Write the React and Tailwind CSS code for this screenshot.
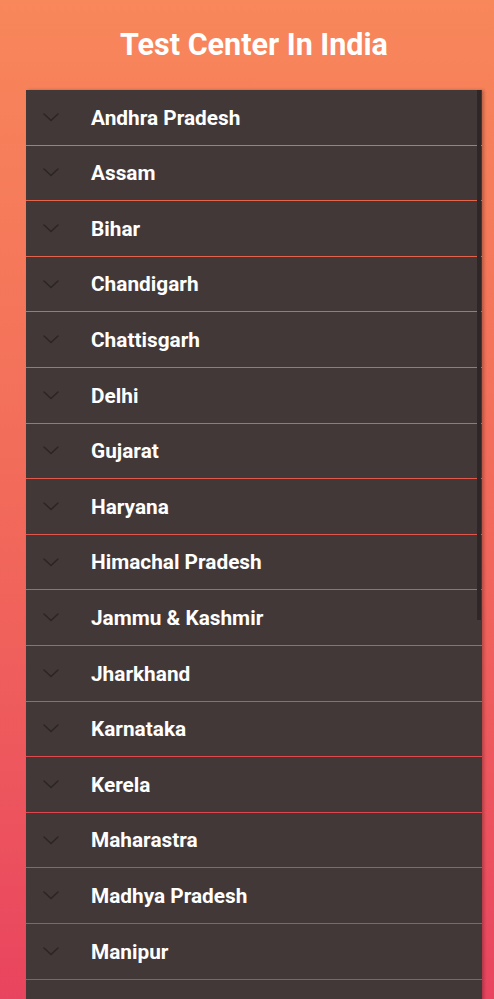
import React from "react";

const states = [
  "Andhra Pradesh",
  "Assam",
  "Bihar",
  "Chandigarh",
  "Chattisgarh",
  "Delhi",
  "Gujarat",
  "Haryana",
  "Himachal Pradesh",
  "Jammu & Kashmir",
  "Jharkhand",
  "Karnataka",
  "Kerela",
  "Maharastra",
  "Madhya Pradesh",
  "Manipur",
  "Meghalaya",
  "Mizoram",
];

const Chevron = () => (
  <svg width="16" height="9" viewBox="0 0 16 9" fill="none">
    <path
      d="M1 1l7 6.5L15 1"
      stroke="#2c2525"
      strokeWidth="1.6"
      strokeLinecap="round"
      strokeLinejoin="round"
    />
  </svg>
);

const App = () => {
  return (
    <div
      className="h-[999px] w-full overflow-hidden bg-gradient-to-b from-[#f8875a] via-[#f26a5a] to-[#e9445f]"
      style={{ fontFamily: "Roboto, 'Liberation Sans', sans-serif" }}
    >
      <div className="ml-[26px] mr-[12px]">
        <h1 className="pt-[24px] h-[90px] text-center text-[30.5px] font-bold text-white leading-[42px]">
          Test Center In India
        </h1>
        <div className="relative flex flex-col gap-px bg-[#b02020]/25 shadow-[2px_0_3px_rgba(0,0,0,0.25)]">
          {states.map((name) => (
            <div
              key={name}
              className="flex h-[54.6px] items-center bg-[#433838]"
            >
              <div className="flex w-[48px] justify-center pl-[2px]">
                <Chevron />
              </div>
              <span className="pl-[17px] pt-[2px] text-[20.8px] font-bold text-white">
                {name}
              </span>
            </div>
          ))}
          <div className="absolute right-[1px] top-0 h-[530px] w-[4px] bg-[#2f2727]" />
        </div>
      </div>
    </div>
  );
};

export default App;
